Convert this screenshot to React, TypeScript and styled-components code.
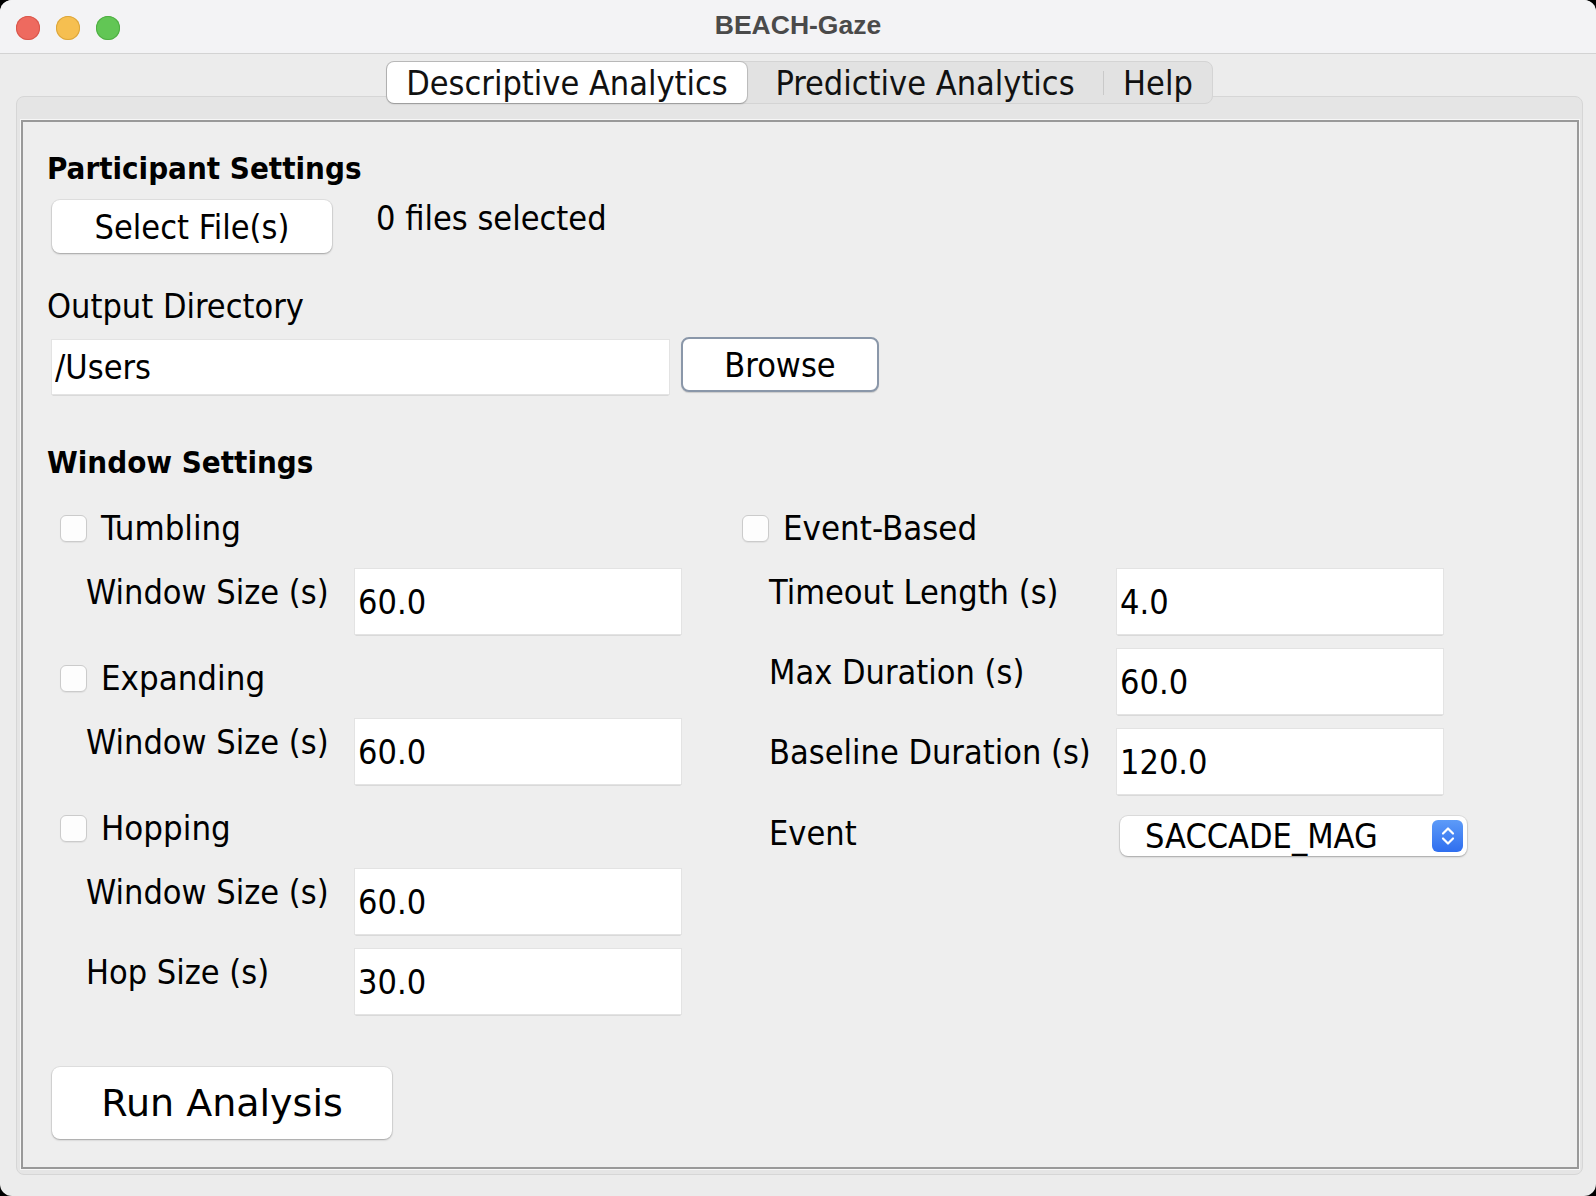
import React from "react";
import styled, { createGlobalStyle } from "styled-components";

const GlobalStyle = createGlobalStyle`
  html, body {
    margin: 0;
    padding: 0;
    background: #000;
  }
  body {
    font-family: "DejaVu Sans Condensed", "DejaVu Sans", sans-serif;
    font-stretch: condensed;
    color: #000;
  }
  * {
    box-sizing: border-box;
  }
`;

const Window = styled.div`
  width: 1596px;
  height: 1196px;
  border-radius: 12px;
  overflow: hidden;
  background: #ececec;
  display: flex;
  flex-direction: column;
`;

const TitleBar = styled.div`
  height: 54px;
  flex-shrink: 0;
  background: #f3f3f5;
  border-bottom: 1px solid #d3d3d3;
  display: grid;
  grid-template-columns: 1fr auto 1fr;
  align-items: center;
`;

const Lights = styled.div`
  display: flex;
  gap: 16px;
  padding-left: 16px;
  margin-top: 2px;
`;

const Light = styled.span<{ $color: string; $edge: string }>`
  width: 24px;
  height: 24px;
  border-radius: 50%;
  background: ${(p) => p.$color};
  box-shadow: inset 0 0 0 1px ${(p) => p.$edge};
`;

const WindowTitle = styled.div`
  font-family: "Liberation Sans", Arial, sans-serif;
  font-stretch: normal;
  font-weight: 700;
  font-size: 26.5px;
  color: #4a4a4a;
  margin-top: -3px;
`;

const Body = styled.div`
  flex: 1;
  display: flex;
  flex-direction: column;
  align-items: center;
  padding: 7px 13px 21px 16px;
`;

const TabBar = styled.div`
  display: flex;
  align-items: stretch;
  height: 43px;
  background: #e2e2e2;
  border: 1px solid #d4d4d4;
  border-radius: 8px;
  position: relative;
  z-index: 1;
`;

const Tab = styled.div<{ $active?: boolean; $width: number }>`
  width: ${(p) => p.$width}px;
  display: flex;
  align-items: center;
  justify-content: center;
  font-size: 34px;
  line-height: 1;
  color: #111;
  border-radius: 7px;
  background: ${(p) => (p.$active ? "#fff" : "transparent")};
  box-shadow: ${(p) =>
    p.$active
      ? "0 0 0 1px rgba(0,0,0,0.12), 0 1px 2px rgba(0,0,0,0.2)"
      : "none"};
`;

const TabSep = styled.span`
  width: 1px;
  height: 24px;
  align-self: center;
  background: #c9c9c9;
`;

const Pane = styled.div`
  align-self: stretch;
  flex: 1;
  margin-top: -8px;
  display: flex;
  background: #e5e5e5;
  border: 1px solid #d6d6d6;
  border-radius: 8px;
  padding: 23px 3px 5px 4px;
`;

const Content = styled.div`
  flex: 1;
  background: #eeeeee;
  border: 2px solid #999;
  box-shadow: 0 0 0 1px #f7f7f7;
  padding: 29px 24px 0 24px;
  display: flex;
  flex-direction: column;
  align-items: flex-start;
`;

const SectionTitle = styled.div<{ $gap?: number }>`
  font-weight: 700;
  font-size: 31px;
  line-height: 34px;
  margin-top: ${(p) => p.$gap ?? 0}px;
`;

const Text = styled.div<{ $gap?: number; $left?: number }>`
  font-size: 34px;
  line-height: 36px;
  margin-top: ${(p) => p.$gap ?? 0}px;
  margin-left: ${(p) => p.$left ?? 0}px;
  white-space: nowrap;
`;

const Row = styled.div<{ $gap: number }>`
  display: flex;
  align-items: flex-start;
  margin-top: ${(p) => p.$gap}px;
`;

const PushButton = styled.div<{ $width: number; $height: number; $focus?: boolean }>`
  width: ${(p) => p.$width}px;
  height: ${(p) => p.$height}px;
  margin-left: 5px;
  display: flex;
  align-items: center;
  justify-content: center;
  background: #fff;
  border-radius: 8px;
  font-size: 34px;
  border: ${(p) => (p.$focus ? "2px solid #8a97a9" : "none")};
  box-shadow: ${(p) =>
    p.$focus
      ? "0 1px 1px rgba(0,0,0,0.15)"
      : "0 0 0 1px rgba(0,0,0,0.06), 0 1px 2px rgba(0,0,0,0.28)"};
`;

const RunButton = styled(PushButton)`
  font-family: "DejaVu Sans", sans-serif;
  font-stretch: normal;
  font-size: 38px;
`;

const Field = styled.input<{ $width: number; $height: number; $top?: number; $left?: number }>`
  width: ${(p) => p.$width}px;
  height: ${(p) => p.$height}px;
  margin: ${(p) => p.$top ?? 0}px 0 0 ${(p) => p.$left ?? 0}px;
  padding: 0 0 0 3px;
  border: none;
  outline: none;
  background: #fff;
  box-shadow: 0 0 0 1px #e3e3e3, 0 2px 0 -0.5px #c4c4c4;
  font-family: inherit;
  font-stretch: condensed;
  font-size: 34px;
  color: #000;
`;

const Columns = styled.div`
  display: flex;
  margin-top: 29px;
`;

const Column = styled.div<{ $width: number }>`
  width: ${(p) => p.$width}px;
  display: flex;
  flex-direction: column;
  align-items: flex-start;
`;

const CheckRow = styled.label<{ $gap: number; $indent: number }>`
  display: flex;
  align-items: center;
  height: 40px;
  margin-top: ${(p) => p.$gap}px;
  padding-left: ${(p) => p.$indent}px;
  font-size: 34.5px;
`;

const Box = styled.span`
  width: 27px;
  height: 27px;
  margin-right: 14px;
  border-radius: 6px;
  background: #fdfdfd;
  border: 1px solid #cbcbcb;
  box-shadow: 0 1px 1px rgba(0, 0, 0, 0.06);
`;

const FieldRow = styled.div<{ $gap: number; $indent: number }>`
  display: flex;
  align-items: flex-start;
  margin-top: ${(p) => p.$gap}px;
  padding-left: ${(p) => p.$indent}px;
`;

const FieldLabel = styled.div<{ $width: number; $top?: number }>`
  width: ${(p) => p.$width}px;
  font-size: 34px;
  line-height: 36px;
  padding-top: ${(p) => p.$top ?? 5}px;
  white-space: nowrap;
`;

const Select = styled.div`
  width: 347px;
  height: 40px;
  margin: 1px 0 0 3px;
  display: flex;
  align-items: center;
  justify-content: space-between;
  padding: 0 4px 0 25px;
  background: #fff;
  border-radius: 8px;
  box-shadow: 0 0 0 1px rgba(0, 0, 0, 0.07), 0 1px 2px rgba(0, 0, 0, 0.25);
  font-size: 34px;
`;

const Stepper = styled.span`
  width: 31px;
  height: 32px;
  border-radius: 6px;
  background: linear-gradient(#5d9bf8, #2f6eef);
  display: flex;
  align-items: center;
  justify-content: center;
`;

type FieldDef = { label: string; value: string; gap: number };

const leftItems: { check: string; gap: number; fields: FieldDef[] }[] = [
  { check: "Tumbling", gap: 0, fields: [{ label: "Window Size (s)", value: "60.0", gap: 21 }] },
  { check: "Expanding", gap: 24, fields: [{ label: "Window Size (s)", value: "60.0", gap: 21 }] },
  {
    check: "Hopping",
    gap: 24,
    fields: [
      { label: "Window Size (s)", value: "60.0", gap: 21 },
      { label: "Hop Size (s)", value: "30.0", gap: 15 },
    ],
  },
];

const eventFields: FieldDef[] = [
  { label: "Timeout Length (s)", value: "4.0", gap: 21 },
  { label: "Max Duration (s)", value: "60.0", gap: 15 },
  { label: "Baseline Duration (s)", value: "120.0", gap: 15 },
];

const App: React.FC = () => {
  return (
    <>
      <GlobalStyle />
      <Window>
        <TitleBar>
          <Lights>
            <Light $color="#ee6a5f" $edge="#d8574c" />
            <Light $color="#f6bf50" $edge="#dba63c" />
            <Light $color="#62c655" $edge="#4fae43" />
          </Lights>
          <WindowTitle>BEACH-Gaze</WindowTitle>
          <div />
        </TitleBar>
        <Body>
          <TabBar>
            <Tab $active $width={360}>Descriptive Analytics</Tab>
            <Tab $width={356}>Predictive Analytics</Tab>
            <TabSep />
            <Tab $width={108}>Help</Tab>
          </TabBar>
          <Pane>
            <Content>
              <SectionTitle>Participant Settings</SectionTitle>
              <Row $gap={15}>
                <PushButton $width={280} $height={53}>Select File(s)</PushButton>
                <Text $left={44}>0 files selected</Text>
              </Row>
              <Text $gap={35}>Output Directory</Text>
              <Row $gap={13}>
                <Field $width={617} $height={54} $top={3} $left={5} readOnly value="/Users" />
                <PushButton $width={198} $height={55} $focus style={{ marginLeft: 12 }}>
                  Browse
                </PushButton>
              </Row>
              <SectionTitle $gap={51}>Window Settings</SectionTitle>
              <Columns>
                <Column $width={695}>
                  {leftItems.map((item) => (
                    <React.Fragment key={item.check}>
                      <CheckRow $gap={item.gap} $indent={13}>
                        <Box />
                        {item.check}
                      </CheckRow>
                      {item.fields.map((f, i) => (
                        <FieldRow key={i} $gap={f.gap} $indent={39}>
                          <FieldLabel $width={269}>{f.label}</FieldLabel>
                          <Field $width={326} $height={65} readOnly value={f.value} />
                        </FieldRow>
                      ))}
                    </React.Fragment>
                  ))}
                  <RunButton $width={340} $height={72} style={{ marginTop: 53 }}>
                    Run Analysis
                  </RunButton>
                </Column>
                <Column $width={760}>
                  <CheckRow $gap={0} $indent={0}>
                    <Box />
                    Event-Based
                  </CheckRow>
                  {eventFields.map((f) => (
                    <FieldRow key={f.label} $gap={f.gap} $indent={27}>
                      <FieldLabel $width={348}>{f.label}</FieldLabel>
                      <Field $width={326} $height={65} readOnly value={f.value} />
                    </FieldRow>
                  ))}
                  <FieldRow $gap={21} $indent={27}>
                    <FieldLabel $width={348} $top={0}>Event</FieldLabel>
                    <Select>
                      SACCADE_MAG
                      <Stepper>
                        <svg width="16" height="22" viewBox="0 0 16 22" fill="none">
                          <path d="M3 8.5 L8 3.5 L13 8.5" stroke="#fff" strokeWidth="2.2" strokeLinecap="round" strokeLinejoin="round" />
                          <path d="M3 13.5 L8 18.5 L13 13.5" stroke="#fff" strokeWidth="2.2" strokeLinecap="round" strokeLinejoin="round" />
                        </svg>
                      </Stepper>
                    </Select>
                  </FieldRow>
                </Column>
              </Columns>
            </Content>
          </Pane>
        </Body>
      </Window>
    </>
  );
};

export default App;
